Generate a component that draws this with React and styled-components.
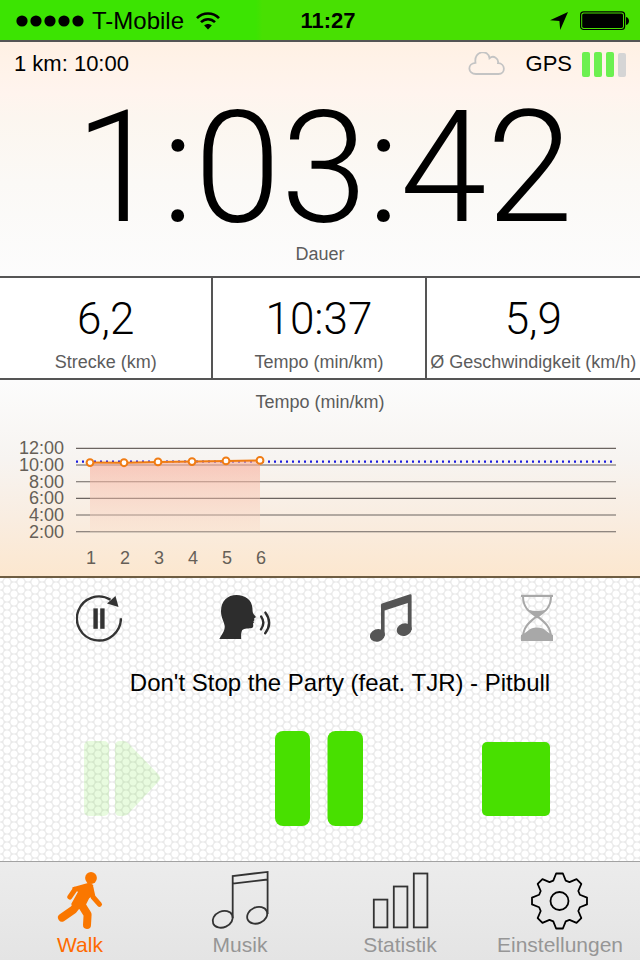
import React, { useState } from "react";
import styled, { createGlobalStyle } from "styled-components";

const GlobalStyle = createGlobalStyle`
	* {
		box-sizing: border-box;
	}
	body {
		margin: 0;
		background: #ffffff;
		color: #000000;
		font-family: 'Liberation Sans', Arial, sans-serif;
	}
	button {
		padding: 0;
		border: none;
		background: none;
		font-family: inherit;
		cursor: pointer;
	}
	svg {
		display: block;
	}
`;

const stats = [
	{ value: "6,2", label: "Strecke (km)" },
	{ value: "10:37", label: "Tempo (min/km)" },
	{ value: "5,9", label: "Ø Geschwindigkeit (km/h)" }
];

// minutes per km, one entry for each finished km
const paces = [10.3, 10.28, 10.38, 10.42, 10.5, 10.56];
const averagePace = 10.42;
const paceTicks = [12, 10, 8, 6, 4, 2];

export default function App(){
	const [page, setPage] = useState("Walk");

	return (
		<Screen>
			<GlobalStyle />
			<StatusBar />
			<Duration>
				<InfoRow>
					<span>1 km: 10:00</span>
					<Gps>
						<CloudIcon />
						<span>GPS</span>
						<GpsBars>
							<GpsBar $active />
							<GpsBar $active />
							<GpsBar $active />
							<GpsBar />
						</GpsBars>
					</Gps>
				</InfoRow>
				<Time>1:03:42</Time>
				<Label>Dauer</Label>
			</Duration>
			<StatsRow>
				{stats.map(item => (
					<Stat key={item.label}>
						<StatValue>{item.value}</StatValue>
						<Label>{item.label}</Label>
					</Stat>
				))}
			</StatsRow>
			<ChartPanel>
				<Label>Tempo (min/km)</Label>
				<PaceChart />
			</ChartPanel>
			<Controls>
				<OptionsRow>
					<IconButton aria-label="Auto-Pause"><AutoPauseIcon /></IconButton>
					<IconButton aria-label="Sprachausgabe"><VoiceIcon /></IconButton>
					<IconButton aria-label="Musik"><NoteIcon /></IconButton>
					<IconButton aria-label="Countdown"><HourglassIcon /></IconButton>
				</OptionsRow>
				<Song>Don&apos;t Stop the Party (feat. TJR) - Pitbull</Song>
				<PlayerRow>
					<IconButton aria-label="Fortsetzen" disabled><ResumeIcon /></IconButton>
					<IconButton aria-label="Pause"><PauseIcon /></IconButton>
					<IconButton aria-label="Stopp"><StopIcon /></IconButton>
				</PlayerRow>
			</Controls>
			<TabBar>
				{tabs.map(({ name, Icon }) => (
					<Tab key={name} $active={page === name} onClick={() => setPage(name)}>
						<Icon />
						{name}
					</Tab>
				))}
			</TabBar>
		</Screen>
	);
}

function StatusBar(){
	return (
		<Status>
			<Carrier>
				<svg width="68" height="14" viewBox="0 0 68 14">
					{[6, 20, 34, 48, 62].map(x => <circle key={x} cx={x} cy="7" r="5.6" />)}
				</svg>
				<span>T-Mobile</span>
				<svg width="24" height="18" viewBox="0 0 24 18" fill="none" stroke="#000" strokeWidth="2.6">
					<path d="M1 6.2 C7 0 17 0 23 6.2" />
					<path d="M5 10.2 C9 6.2 15 6.2 19 10.2" />
					<path d="M12 17.5 L8.2 13.6 C10.4 11.6 13.6 11.6 15.8 13.6 Z" fill="#000" stroke="none" />
				</svg>
			</Carrier>
			<Clock>11:27</Clock>
			<StatusIcons>
				<svg width="18" height="18" viewBox="0 0 18 18">
					<path d="M18 0 L10.2 18 L9.4 9 L0 8.2 Z" />
				</svg>
				<svg width="50" height="20" viewBox="0 0 50 20">
					<rect x="0.6" y="0.9" width="44" height="17.6" rx="3" fill="none" stroke="#000" strokeWidth="1.2" />
					<rect x="2.2" y="2.5" width="40.8" height="14.4" rx="1.6" />
					<path d="M46 6 C50 7 50 13 46 14 Z" />
				</svg>
			</StatusIcons>
		</Status>
	);
}

function PaceChart(){
	const getX = km => 56 + km * 34;
	const getY = pace => 18.4 + (12 - pace) * 8.33;
	const points = paces.map((pace, i) => [getX(i + 1), getY(pace)]);
	const line = points.map(point => point.join(",")).join(" ");
	const bottom = getY(2);

	return (
		<Chart viewBox="0 0 640 146" role="img" aria-label="Tempo pro Kilometer">
			<defs>
				<linearGradient id="area" x1="0" y1="0" x2="0" y2="1">
					<stop offset="0" stopColor="#f8a894" stopOpacity="0.6" />
					<stop offset="1" stopColor="#f9dcc8" stopOpacity="0.35" />
				</linearGradient>
			</defs>
			{paceTicks.map(tick => (
				<g key={tick}>
					<line x1="76" x2="616" y1={getY(tick)} y2={getY(tick)} stroke="#6b6460" strokeWidth="1.1" />
					<text x="64" y={getY(tick) + 6} textAnchor="end">{tick}:00</text>
				</g>
			))}
			<line
				x1="76" x2="614" y1={getY(averagePace)} y2={getY(averagePace)}
				stroke="#1c1ce0" strokeWidth="2.2" strokeDasharray="2 4"
			/>
			<polygon points={`${points[0][0]},${bottom} ${line} ${points[5][0]},${bottom}`} fill="url(#area)" />
			<polyline points={line} fill="none" stroke="#f07c14" strokeWidth="2" />
			{points.map(([x, y], i) => (
				<g key={x}>
					<circle cx={x} cy={y} r="3.4" fill="#fff" stroke="#f07c14" strokeWidth="2" />
					<text x={x + 1} y="134" textAnchor="middle">{i + 1}</text>
				</g>
			))}
		</Chart>
	);
}

function CloudIcon(){
	return (
		<svg width="38" height="25" viewBox="0 0 38 25" fill="none" stroke="#c4c4c4" strokeWidth="1.8">
			<path d="M8 22 C-0.5 22 -1 11.5 7.5 10.8 C5.5 -1.5 20.5 -3 21.5 6.2 C25.5 2.8 31 6.5 30 11.2 C38 11.5 37.5 22 30.5 22 Z" />
		</svg>
	);
}

function AutoPauseIcon(){
	return (
		<svg width="46" height="48" viewBox="0 0 46 48" fill="#333">
			<path d="M44.9 24.3 A22 22 0 1 1 34.5 5.8" fill="none" stroke="#333" strokeWidth="2.4" />
			<path d="M39.5 2 L42.5 13 L31 9.6 Z" />
			<rect x="17.4" y="14.4" width="4.4" height="20.4" />
			<rect x="24.2" y="14.4" width="4.4" height="20.4" />
		</svg>
	);
}

function VoiceIcon(){
	return (
		<svg width="54" height="48" viewBox="0 0 54 48" fill="#2d2d2d">
			<path d="M1.3 45 C4 40 7 37 6.7 32 C6 27 3 24 3 17 C3 7 9.5 1 18.5 1 C27 1 34 6 34.4 14 C34.6 17 34.5 18 35.5 20 L37.8 22.8 C37.8 24 36.6 24 36.2 24.4 L36.4 26.2 L35.4 27.2 L36 28.6 L35 29.6 C35.6 32 35.4 34 33 34.3 C29 34.6 25 34.4 23.8 37 C23 39 23 42 23.2 45 Z" />
			<path d="M43.2 22.6 Q47.6 29 43 35.4 M47.4 18.6 Q55 29 47.2 39.2" fill="none" stroke="#2d2d2d" strokeWidth="2.4" strokeLinecap="round" />
		</svg>
	);
}

function NoteIcon(){
	return (
		<svg width="42" height="48" viewBox="0 0 42 48" fill="#555">
			<path d="M11 11 Q11 10 12 9.6 L40 0.2 Q41.6 0 41.6 1.6 V36 H37.8 V9 L14.6 16.6 V42 H11 Z" />
			<ellipse cx="7.4" cy="41.4" rx="7.6" ry="6.2" transform="rotate(-20 7.4 41.4)" />
			<ellipse cx="34.2" cy="35.6" rx="7.6" ry="6.2" transform="rotate(-20 34.2 35.6)" />
		</svg>
	);
}

function HourglassIcon(){
	return (
		<svg width="34" height="48" viewBox="0 0 34 48" fill="#a8a8a8">
			<path d="M1 0.8 H33 V3 H1 Z" />
			<path d="M3 2 C3 14 9 17.5 17 23 C25 17.5 31 14 31 2 M3 44 C3 33 9 28.5 17 22 C25 28.5 31 33 31 44" fill="none" stroke="#a8a8a8" strokeWidth="2" />
			<path d="M8.5 15.8 C14 17.5 20 17.5 25.5 15.8 L17 24 Z" />
			<path d="M1 47 V41 C8 38 9 33.4 17 33.4 C25 33.4 26 38 33 41 V47 Z" />
		</svg>
	);
}

function ResumeIcon(){
	return (
		<svg width="76" height="75" viewBox="0 0 76 75" fill="#48e000">
			<rect width="25" height="75" rx="5" />
			<path d="M31 5 Q31 0 36 0 H39 Q42 0 44 2 L75 34 Q77 37.5 75 40 L44 73 Q42 75 39 75 H36 Q31 75 31 70 Z" />
		</svg>
	);
}

function PauseIcon(){
	return (
		<svg width="88" height="95" viewBox="0 0 88 95" fill="#48e000">
			<rect width="35" height="95" rx="8" />
			<rect x="52.5" width="35.5" height="95" rx="8" />
		</svg>
	);
}

function StopIcon(){
	return (
		<svg width="68" height="74" viewBox="0 0 68 74" fill="#48e000">
			<rect width="68" height="74" rx="5" />
		</svg>
	);
}

function WalkIcon(){
	return (
		<svg width="60" height="60" viewBox="0 0 60 60" fill="#fa7700" stroke="#fa7700" strokeLinecap="round" strokeLinejoin="round">
			<circle cx="41" cy="8" r="5.9" stroke="none" />
			<path d="M23 18 L39 13.5 L42.5 15.5 L42 25 L38.5 28 L35 35 L31 38 L25 38 L22 34 L29 21.5 Z" strokeWidth="1.5" />
			<path d="M25 19.5 L19.8 27" fill="none" strokeWidth="5" />
			<path d="M41 18 L43 27 L49.5 34.4" fill="none" strokeWidth="5" />
			<path d="M27 35 L23.5 39.6 L12 47.6" fill="none" strokeWidth="8" />
			<path d="M31 34 L37.6 44.5 L37 55" fill="none" strokeWidth="8" />
		</svg>
	);
}

function MusicIcon(){
	return (
		<svg width="60" height="60" viewBox="0 0 60 60" fill="none" stroke="#333" strokeWidth="1.8">
			<path d="M22.7 48 V6 L57.6 1.9 V44 M22.7 13.7 L57.6 9.5" />
			<ellipse cx="12.7" cy="49.3" rx="10.4" ry="8" transform="rotate(-24 12.7 49.3)" />
			<ellipse cx="47.2" cy="45.3" rx="10.4" ry="8" transform="rotate(-24 47.2 45.3)" />
		</svg>
	);
}

function StatsIcon(){
	return (
		<svg width="60" height="60" viewBox="0 0 60 60" fill="none" stroke="#333" strokeWidth="1.8">
			<rect x="3.8" y="29.6" width="13.6" height="27.8" />
			<rect x="23.8" y="16.5" width="13.6" height="40.9" />
			<rect x="43.8" y="3.5" width="13.6" height="53.9" />
		</svg>
	);
}

function GearIcon(){
	const points = [];
	for(let tooth = 0; tooth < 8; tooth++){
		[[-17, 21.3], [-7, 27.7], [7, 27.7], [17, 21.3]].forEach(([offset, radius]) => {
			const angle = (tooth * 45 + offset) * Math.PI / 180;
			points.push(`${29.5 + radius * Math.sin(angle)},${31 - radius * Math.cos(angle)}`);
		});
	}
	return (
		<svg width="60" height="60" viewBox="0 0 60 60" fill="none" stroke="#000" strokeWidth="1.8" strokeLinejoin="round">
			<polygon points={points.join(" ")} />
			<circle cx="29.5" cy="31" r="9" />
		</svg>
	);
}

const tabs = [
	{ name: "Walk", Icon: WalkIcon },
	{ name: "Musik", Icon: MusicIcon },
	{ name: "Statistik", Icon: StatsIcon },
	{ name: "Einstellungen", Icon: GearIcon }
];

const Screen = styled.div`
	min-height: 100vh;
	display: flex;
	flex-direction: column;
`;

const Status = styled.header`
	height: 42px;
	display: grid;
	grid-template-columns: 1fr auto 1fr;
	align-items: center;
	padding: 2px 0 0 16px;
	background: linear-gradient(90deg, #3ce402 40%, #48e002 41%);
	border-bottom: 2px solid #555555;
`;

const Carrier = styled.div`
	display: flex;
	align-items: center;
	gap: 8px;
	font-size: 24px;
	line-height: 38px;

	span {
		margin-right: 4px;
	}
`;

const Clock = styled.div`
	font-size: 22px;
	line-height: 38px;
	font-weight: bold;
`;

const StatusIcons = styled.div`
	display: flex;
	align-items: center;
	justify-content: flex-end;
	gap: 12px;
	padding-right: 10px;
`;

const Duration = styled.section`
	display: flex;
	flex-direction: column;
	padding-bottom: 10px;
	background: linear-gradient(#fff1e4, #fff4ee 22%, #fcf6ef 32%, #fbf9f6 60%, #fcfcfc);
`;

const InfoRow = styled.div`
	display: flex;
	justify-content: space-between;
	padding: 8px 14px 0;
	font-size: 22px;
	line-height: 28px;
`;

const Gps = styled.div`
	display: flex;
	align-items: center;

	svg {
		margin-right: 20px;
	}
`;

const GpsBars = styled.div`
	display: flex;
	align-items: flex-end;
	gap: 4px;
	margin-left: 10px;
`;

const GpsBar = styled.div`
	width: 8px;
	height: ${props => props.$active ? "25px" : "24px"};
	border-radius: 2px;
	background: ${props => props.$active ? "#6cf050" : "#d5d5d5"};
`;

const Time = styled.div`
	padding: 16px 0 0 8px;
	font-family: Roboto, 'Liberation Sans', sans-serif;
	font-weight: 300;
	font-size: 156px;
	line-height: 148px;
	text-align: center;
	white-space: nowrap;
`;

const Label = styled.div`
	color: #5c5c5c;
	font-size: 18px;
	line-height: 24px;
	text-align: center;
	white-space: nowrap;
`;

const StatsRow = styled.section`
	display: grid;
	grid-template-columns: repeat(3, 1fr);
	border-top: 2px solid #555555;
	border-bottom: 2px solid #555555;
	background: #ffffff;
`;

const Stat = styled.div`
	min-width: 0;
	display: flex;
	flex-direction: column;
	gap: 6px;
	padding: 16px 0 4px;

	&:not(:last-child) {
		border-right: 2px solid #555555;
	}
`;

const StatValue = styled.div`
	font-family: Roboto, 'Liberation Sans', sans-serif;
	font-weight: 300;
	font-size: 44px;
	line-height: 50px;
	text-align: center;
`;

const ChartPanel = styled.section`
	padding-top: 10px;
	background: linear-gradient(#fcfcfc, #f7f4f1 40%, #f9ede1 70%, #fce7cf);
	border-bottom: 2px solid #6e5d42;
`;

const Chart = styled.svg`
	width: 100%;
	margin-top: 16px;

	text {
		fill: #665f57;
		font-size: 18px;
	}
`;

const Controls = styled.section`
	flex: 1;
	display: flex;
	flex-direction: column;
	background-color: #e9e9e9;
	background-image:
		radial-gradient(circle, #ffffff 3px, transparent 4px),
		radial-gradient(circle, #ffffff 3px, transparent 4px);
	background-position: 0 0, 7px 4px;
	background-size: 14px 8px;
`;

const OptionsRow = styled.div`
	display: grid;
	grid-template-columns: repeat(4, 1fr);
	justify-items: center;
	padding: 16px 30px 0 26px;
`;

const IconButton = styled.button`
	&:disabled {
		opacity: 0.12;
		cursor: default;
	}
`;

const Song = styled.div`
	padding: 25px 0 32px 40px;
	font-size: 24px;
	line-height: 32px;
	text-align: center;
`;

const PlayerRow = styled.div`
	display: grid;
	grid-template-columns: repeat(3, 1fr);
	align-items: center;
	justify-items: center;
	padding: 0 26px 34px 24px;
`;

const TabBar = styled.nav`
	display: grid;
	grid-template-columns: repeat(4, 1fr);
	border-top: 1px solid #a2a2a2;
	background: linear-gradient(#ececec, #e4e4e4);
`;

const Tab = styled.button`
	display: flex;
	flex-direction: column;
	align-items: center;
	padding-top: 8px;
	color: ${props => props.$active ? "#ff6a00" : "#969696"};
	font-size: 21px;
	line-height: 30px;
`;
